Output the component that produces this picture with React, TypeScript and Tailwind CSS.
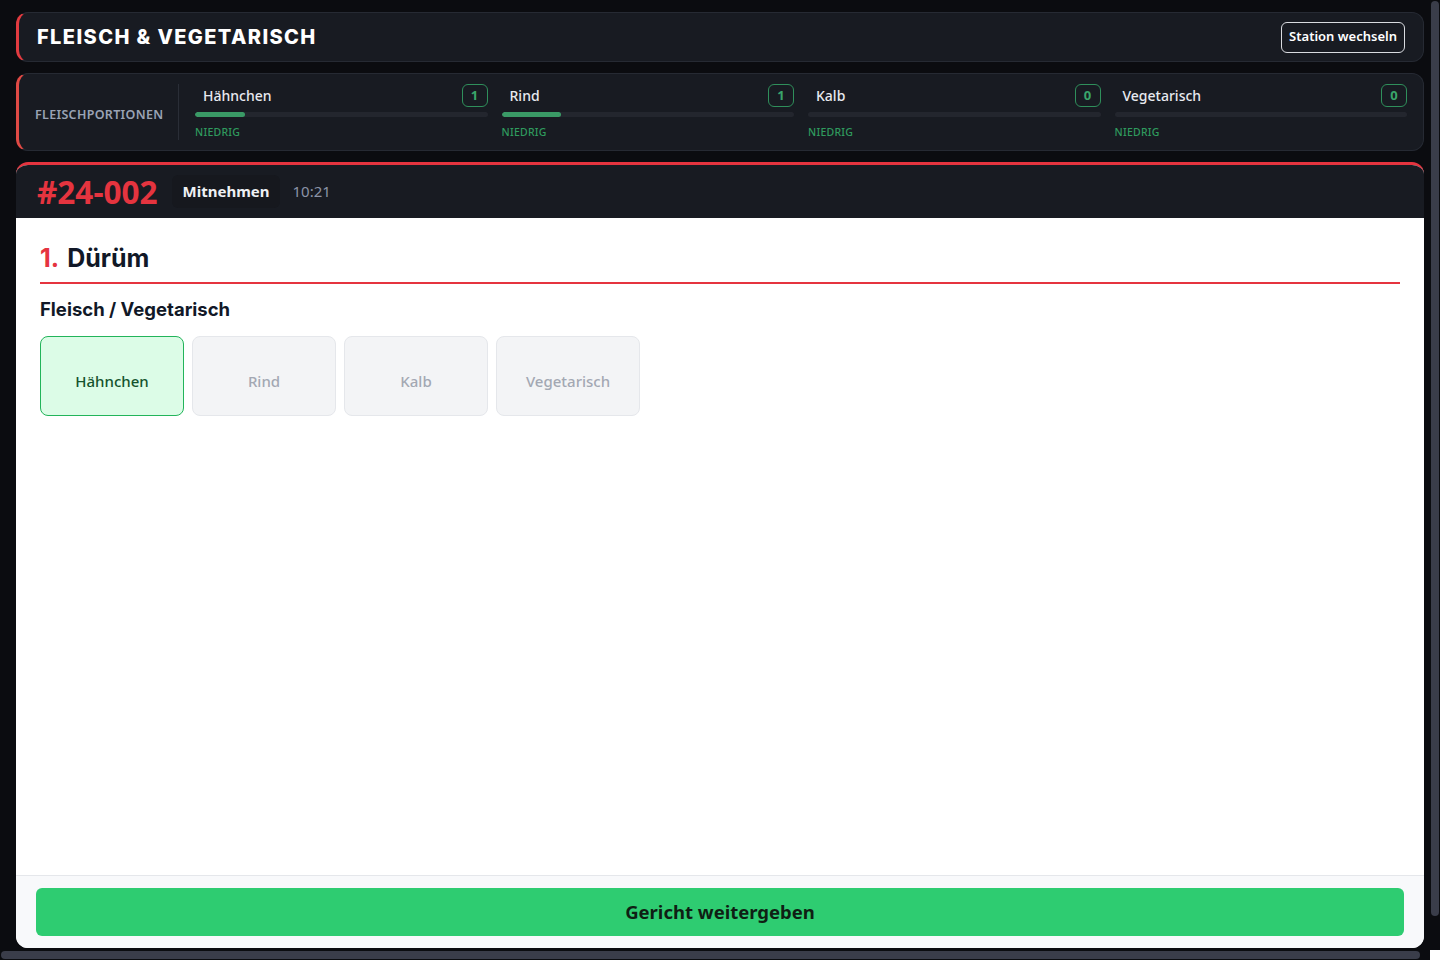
import React from "react";

const portions = [
  { name: "Hähnchen", count: 1, fill: 50 },
  { name: "Rind", count: 1, fill: 59 },
  { name: "Kalb", count: 0, fill: 0 },
  { name: "Vegetarisch", count: 0, fill: 0 },
];

const options = ["Hähnchen", "Rind", "Kalb", "Vegetarisch"];

const App = () => {
  const selected = "Hähnchen";

  return (
    <div
      className="h-screen w-screen flex flex-col overflow-hidden bg-[#0b0c10]"
      style={{ fontFamily: '"Noto Sans", "Open Sans", sans-serif' }}
    >
      <div className="flex h-[950px]">
        {/* Scroll viewport */}
        <div className="w-[1430px] overflow-hidden">
          <div className="w-[1440px] h-[986px] px-4 pt-3 pb-[38px] flex flex-col gap-[11px]">
            {/* Station header */}
            <div className="h-[50px] w-[1408px] flex items-center justify-between rounded-xl border border-[#262a33] border-l-[3px] border-l-[#e23b40] bg-[#181b22] pl-[18px] pr-[18px]">
              <h1
                className="text-[20px] font-extrabold tracking-[0.07em] text-white"
                style={{ fontFamily: "Inter, sans-serif" }}
              >
                FLEISCH &amp; VEGETARISCH
              </h1>
              <button className="h-[31px] rounded-md border border-[#d9dbe0] px-[7px] text-[13px] font-semibold text-white">
                Station wechseln
              </button>
            </div>

            {/* Portions */}
            <div className="h-[78px] w-[1408px] flex items-center rounded-xl border border-[#262a33] border-l-[3px] border-l-[#e04a45] bg-[#181b22] pl-4 pr-4">
              <div className="w-[143px] mt-[6px] text-[12.5px] font-semibold tracking-wide text-[#9aa3b5]">
                FLEISCHPORTIONEN
              </div>
              <div className="h-[56px] w-px bg-[#2a2e37]" />
              <div className="flex-1 grid grid-cols-4 gap-[14px] pl-4">
                {portions.map((p) => (
                  <div key={p.name} className="flex flex-col pt-[1px]">
                    <div className="flex items-center justify-between h-[23px]">
                      <span className="px-2 text-[14px] font-medium text-[#e8eaf0]">{p.name}</span>
                      <span className="flex h-[23px] w-[26px] items-center justify-center rounded-md border border-[#2f8f5b] text-[13px] font-bold text-[#3aa56b]">
                        {p.count}
                      </span>
                    </div>
                    <div className="mt-[5px] h-[5px] rounded-full bg-[#23262e] overflow-hidden">
                      {p.fill > 0 && (
                        <div className="h-full rounded-full bg-[#3a9a66]" style={{ width: p.fill }} />
                      )}
                    </div>
                    <div className="mt-[8px] text-[10.5px] font-medium tracking-wide text-[#2f9a5e]">NIEDRIG</div>
                  </div>
                ))}
              </div>
            </div>

            {/* Order card */}
            <div className="w-[1408px] flex-1 flex flex-col overflow-hidden rounded-xl border-t-[3px] border-[#e5343f] bg-white">
              <div className="h-[53px] flex items-center bg-[#181b22] pl-[21px]">
                <span className="text-[31.5px] font-bold leading-none text-[#e5343f]">#24-002</span>
                <span className="ml-[14px] rounded-md bg-[#16181e] px-[11px] py-[5px] text-[15px] font-bold text-[#eef0f4]">
                  Mitnehmen
                </span>
                <span className="ml-[12px] text-[15px] font-normal text-[#8b93a7]">10:21</span>
              </div>

              <div className="flex-1 px-6 pt-[22px]">
                <div
                  className="flex items-baseline gap-[8px] border-b-2 border-[#e5343f] pb-[4px] text-[25px] font-bold text-[#111827]"
                  style={{ fontFamily: "Inter, sans-serif" }}
                >
                  <span className="text-[#e5343f]">1.</span>
                  <span>Dürüm</span>
                </div>
                <h3
                  className="mt-[12px] text-[18.5px] font-bold text-[#111827]"
                  style={{ fontFamily: "Inter, sans-serif" }}
                >
                  Fleisch / Vegetarisch
                </h3>
                <div className="mt-[13px] flex gap-2">
                  {options.map((o) =>
                    o === selected ? (
                      <button
                        key={o}
                        className="h-[80px] w-[144px] pt-[9px] rounded-lg border border-[#22b45a] bg-[#dcfce7] text-[15px] font-medium text-[#14532d]"
                      >
                        {o}
                      </button>
                    ) : (
                      <button
                        key={o}
                        className="h-[80px] w-[144px] pt-[9px] rounded-lg border border-[#e5e7eb] bg-[#f3f4f6] text-[15px] font-medium text-[#a3a8b3]"
                      >
                        {o}
                      </button>
                    )
                  )}
                </div>
              </div>

              <div className="border-t border-[#e5e7eb] bg-[#f8f9fb] px-5 py-3">
                <button className="h-[48px] w-full rounded-md bg-[#2ecc71] text-[18.5px] font-bold text-[#0f1f14]">
                  Gericht weitergeben
                </button>
              </div>
            </div>
          </div>
        </div>

        {/* Vertical scrollbar */}
        <div className="w-[10px] pt-[1px] pl-[1px]">
          <div className="h-[915px] w-[8px] rounded-full bg-[#3a3d4a]" />
        </div>
      </div>

      {/* Horizontal scrollbar */}
      <div className="flex h-[10px]">
        <div className="w-[1430px] pt-[1px] pl-[1px]">
          <div className="h-[8px] w-[1419px] rounded-full bg-[#3a3d4a]" />
        </div>
        <div className="w-[10px] bg-white" />
      </div>
    </div>
  );
};

export default App;
